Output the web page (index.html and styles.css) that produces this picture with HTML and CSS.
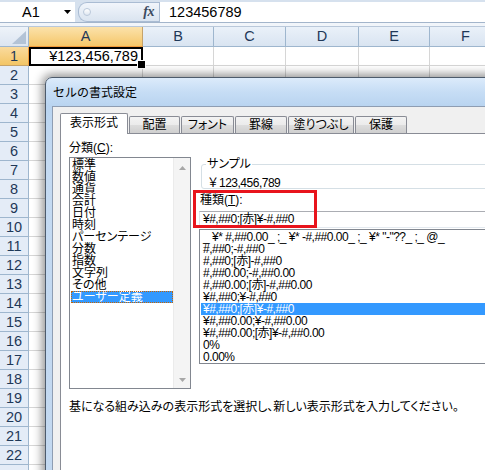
FILE: index.html
```html
<!DOCTYPE html>
<html lang="ja">
<head>
<meta charset="utf-8">
<title>セルの書式設定</title>
<link rel="stylesheet" href="styles.css">
</head>
<body>
<div class="app">
  <div class="fbar">
    <div class="namebox"><span>A1</span><svg class="dd" width="7" height="4" viewBox="0 0 7 4"><path d="M0 0H7L3.5 4Z" fill="#000"/></svg></div>
    <div class="fxzone"><span class="dot"></span><span class="fx">fx</span></div>
    <div class="finput">123456789</div>
  </div>
  <div class="fgap"></div>
  <div class="sheet">
    <div class="corner"><svg width="14" height="13" viewBox="0 0 14 13"><path d="M14 0V13H0Z" fill="#b3c3d6"/></svg></div>
    <div class="ch sel">A</div><div class="ch">B</div><div class="ch">C</div><div class="ch">D</div><div class="ch">E</div><div class="ch">F</div>
    <div class="rh sel">1</div><div class="c a1">¥123,456,789</div><div class="c"></div><div class="c"></div><div class="c"></div><div class="c"></div><div class="c"></div>
    <div class="rh">2</div><div class="c"></div><div class="c"></div><div class="c"></div><div class="c"></div><div class="c"></div><div class="c"></div>
    <div class="rh">3</div><div class="c"></div><div class="c"></div><div class="c"></div><div class="c"></div><div class="c"></div><div class="c"></div>
    <div class="rh">4</div><div class="c"></div><div class="c"></div><div class="c"></div><div class="c"></div><div class="c"></div><div class="c"></div>
    <div class="rh">5</div><div class="c"></div><div class="c"></div><div class="c"></div><div class="c"></div><div class="c"></div><div class="c"></div>
    <div class="rh">6</div><div class="c"></div><div class="c"></div><div class="c"></div><div class="c"></div><div class="c"></div><div class="c"></div>
    <div class="rh">7</div><div class="c"></div><div class="c"></div><div class="c"></div><div class="c"></div><div class="c"></div><div class="c"></div>
    <div class="rh">8</div><div class="c"></div><div class="c"></div><div class="c"></div><div class="c"></div><div class="c"></div><div class="c"></div>
    <div class="rh">9</div><div class="c"></div><div class="c"></div><div class="c"></div><div class="c"></div><div class="c"></div><div class="c"></div>
    <div class="rh">10</div><div class="c"></div><div class="c"></div><div class="c"></div><div class="c"></div><div class="c"></div><div class="c"></div>
    <div class="rh">11</div><div class="c"></div><div class="c"></div><div class="c"></div><div class="c"></div><div class="c"></div><div class="c"></div>
    <div class="rh">12</div><div class="c"></div><div class="c"></div><div class="c"></div><div class="c"></div><div class="c"></div><div class="c"></div>
    <div class="rh">13</div><div class="c"></div><div class="c"></div><div class="c"></div><div class="c"></div><div class="c"></div><div class="c"></div>
    <div class="rh">14</div><div class="c"></div><div class="c"></div><div class="c"></div><div class="c"></div><div class="c"></div><div class="c"></div>
    <div class="rh">15</div><div class="c"></div><div class="c"></div><div class="c"></div><div class="c"></div><div class="c"></div><div class="c"></div>
    <div class="rh">16</div><div class="c"></div><div class="c"></div><div class="c"></div><div class="c"></div><div class="c"></div><div class="c"></div>
    <div class="rh">17</div><div class="c"></div><div class="c"></div><div class="c"></div><div class="c"></div><div class="c"></div><div class="c"></div>
    <div class="rh">18</div><div class="c"></div><div class="c"></div><div class="c"></div><div class="c"></div><div class="c"></div><div class="c"></div>
    <div class="rh">19</div><div class="c"></div><div class="c"></div><div class="c"></div><div class="c"></div><div class="c"></div><div class="c"></div>
    <div class="rh">20</div><div class="c"></div><div class="c"></div><div class="c"></div><div class="c"></div><div class="c"></div><div class="c"></div>
    <div class="rh">21</div><div class="c"></div><div class="c"></div><div class="c"></div><div class="c"></div><div class="c"></div><div class="c"></div>
    <div class="rh">22</div><div class="c"></div><div class="c"></div><div class="c"></div><div class="c"></div><div class="c"></div><div class="c"></div>
    <div class="rh"></div><div class="c"></div><div class="c"></div><div class="c"></div><div class="c"></div><div class="c"></div><div class="c"></div>
  </div>

  <div class="dialog">
    <div class="titlebar">セルの書式設定</div>
    <div class="client">
      <div class="tabs">
        <div class="tab active">表示形式</div>
        <div class="tab w-haichi">配置</div>
        <div class="tab w-font">フォント</div>
        <div class="tab w-keisen">罫線</div>
        <div class="tab w-nuri">塗りつぶし</div>
        <div class="tab w-hogo">保護</div>
      </div>
      <div class="pane">
        <div class="left">
          <div class="lbl">分類(<u>C</u>):</div>
          <div class="listbox">
            <div class="items">
              <div class="it">標準</div>
              <div class="it">数値</div>
              <div class="it">通貨</div>
              <div class="it">会計</div>
              <div class="it">日付</div>
              <div class="it">時刻</div>
              <div class="it">パーセンテージ</div>
              <div class="it">分数</div>
              <div class="it">指数</div>
              <div class="it">文字列</div>
              <div class="it">その他</div>
              <div class="it sel">ユーザー定義</div>
            </div>
            <div class="vscroll">
              <div class="arr arr-up"><svg width="7" height="4" viewBox="0 0 7 4"><path d="M0 4H7L3.5 0Z" fill="#a7a7a7"/></svg></div>
              <div class="arr"><svg width="7" height="4" viewBox="0 0 7 4"><path d="M0 0H7L3.5 4Z" fill="#a7a7a7"/></svg></div>
            </div>
          </div>
        </div>
        <div class="right">
          <fieldset class="sample">
            <legend>サンプル</legend>
            <div class="sample-val num"><span class="yen">￥</span>123,456,789</div>
          </fieldset>
          <div class="kind">種類(<u>T</u>):</div>
          <div class="textbox num">¥#,##0;[赤]¥-#,##0</div>
          <div class="fmtlist">
            <div class="fl num">_ ¥* #,##0.00_ ;_ ¥* -#,##0.00_ ;_ ¥* "-"??_ ;_ @_</div>
            <div class="fl num">#,##0;-#,##0</div>
            <div class="fl num">#,##0;[赤]-#,##0</div>
            <div class="fl num">#,##0.00;-#,##0.00</div>
            <div class="fl num">#,##0.00;[赤]-#,##0.00</div>
            <div class="fl num">¥#,##0;¥-#,##0</div>
            <div class="fl num sel">¥#,##0;[赤]¥-#,##0</div>
            <div class="fl num">¥#,##0.00;¥-#,##0.00</div>
            <div class="fl num">¥#,##0.00;[赤]¥-#,##0.00</div>
            <div class="fl num">0%</div>
            <div class="fl num">0.00%</div>
          </div>
          <div class="redbox"></div>
        </div>
        <div class="desc">基になる組み込みの表示形式を選択し、新しい表示形式を入力してください。</div>
      </div>
    </div>
  </div>
</div>
</body>
</html>
```

FILE: styles.css
```css
* { box-sizing: border-box; margin: 0; padding: 0; }
html, body { width: 485px; height: 470px; overflow: hidden; background: #fff; }
body { font-family: "Liberation Sans", Arial, sans-serif; color: #000; }
.app { position: relative; width: 485px; height: 470px; overflow: hidden; }

/* formula bar */
.fbar { display: flex; height: 23px; padding-top: 2px; background: #d6e1ee; border-bottom: 1px solid #a3b5cb; }
.namebox { width: 75px; background: #fff; display: flex; align-items: center; justify-content: space-between; padding: 0 4px 0 22px; font-size: 14.5px; }
.dd { display: block; }
.fxzone { width: 81px; margin-left: 3px; display: flex; align-items: center; justify-content: space-between; padding: 0 5px 0 4px; border: 1px solid #aabcd3; border-right: none; border-radius: 9px 0 0 9px; background: linear-gradient(#f1f5fb, #dae4f0); }
.dot { width: 8px; height: 8px; border-radius: 50%; border: 1px solid #bac8da; background: linear-gradient(#ffffff, #dfe7f1); }
.fx { font-family: "Liberation Serif", serif; font-style: italic; font-weight: bold; font-size: 14px; color: #3b4a60; letter-spacing: -0.5px; }
.finput { flex: 1; background: #fff; border-left: 1px solid #aabcd3; padding-left: 9px; font-size: 14.5px; line-height: 20px; }
.fgap { height: 4px; background: #f1f5fa; border-bottom: 1px solid #b9c8da; }

/* sheet */
.sheet { display: grid; grid-template-columns: 29px 114px 71px 72px 73px 71px 72px; grid-template-rows: 20px repeat(23, 19px); font-size: 14.5px; }
.corner { background: linear-gradient(#eef3f9, #dce5f1); border-right: 1px solid #9eb6ce; border-bottom: 1px solid #9eb6ce; display: flex; align-items: flex-end; justify-content: flex-end; padding: 0 2px 2px 0; }
.corner svg { display: block; }
.ch { background: linear-gradient(#eaf1f9, #d9e4f1); border-right: 1px solid #9eb6ce; border-bottom: 1px solid #9eb6ce; text-align: center; line-height: 19px; color: #1f3858; }
.ch.sel { background: linear-gradient(#fbe2ab, #f5c76a); border-bottom-color: #f29b3a; border-right-color: #c6a36a; }
.rh { background: #e4ecf7; border-right: 1px solid #9eb6ce; border-bottom: 1px solid #9eb6ce; text-align: center; line-height: 18px; color: #1f3858; }
.rh.sel { background: linear-gradient(#fadb9e, #f3c565); border-right-color: #f29b3a; border-bottom-color: #c6a36a; }
.c { border-right: 1px solid #d6d6d6; border-bottom: 1px solid #d6d6d6; }
.a1 { position: relative; z-index: 2; outline: 2px solid #000; outline-offset: -2px; text-align: right; padding-right: 4px; line-height: 18px; }
.a1::after { content: ""; position: absolute; right: -4px; bottom: -4px; width: 7px; height: 7px; background: #000; border: 1px solid #fff; }

/* dialog */
.dialog { position: absolute; left: 45px; top: 77px; width: 500px; height: 420px; border: 1px solid #4d5b6c; border-radius: 7px 7px 0 0; background: linear-gradient(180deg, #dcebfb 0, #c6ddf5 14px, #b9d4f0 28px, #c4daf2 80px, #c2d8f0 100%); box-shadow: 0 0 10px 3px rgba(0,0,0,0.42); padding-left: 6px; display: flex; flex-direction: column; font-family: "Liberation Sans", "Noto Sans CJK JP", sans-serif; font-size: 12px; font-feature-settings: "palt" 1; z-index: 5; }
.titlebar { height: 28px; line-height: 28px; padding-left: 1px; font-family: "Noto Sans CJK JP", sans-serif; font-feature-settings: normal; font-size: 12px; color: #000; }
.client { flex: 1; background: #f0f0f0; border-left: 1px solid #8e9db2; border-top: 1px solid #8e9db2; padding: 6px 0 0 7px; display: flex; flex-direction: column; }
.tabs { display: flex; gap: 1px; height: 21px; margin-bottom: -1px; position: relative; z-index: 1; }
.tab { height: 17px; margin-top: 3px; border: 1px solid #898c95; border-bottom: none; border-radius: 2px 2px 0 0; background: linear-gradient(#f3f3f3, #ebebeb 50%, #dddddd 51%, #cfcfcf); text-align: center; line-height: 16px; white-space: nowrap; }
.tab.active { width: 68px; height: 21px; margin-top: 0; background: #fff; line-height: 19px; }
.w-haichi { width: 51px; }
.w-font { width: 53px; }
.w-keisen { width: 52px; }
.w-nuri { width: 66px; }
.w-hogo { width: 52px; }

.pane { flex: 1; background: #fff; border: 1px solid #898c95; display: grid; grid-template-columns: 122px 1fr; column-gap: 8px; align-content: start; padding: 8px 0 0 8px; }
.lbl { height: 12px; line-height: 12px; white-space: nowrap; }
.listbox { margin-top: 3px; height: 232px; border: 1px solid #828790; display: flex; }
.items { flex: 1; padding: 1px 0 0 1px; }
.it { height: 12px; line-height: 12px; padding-left: 1px; white-space: nowrap; }
.it.sel { background: #3399ff; color: #fff; outline: 1px dotted #c86400; outline-offset: -1px; }
.vscroll { width: 17px; background: #f4f4f4; border-left: 1px solid #ebebeb; display: flex; flex-direction: column; justify-content: space-between; }
.arr { height: 17px; display: flex; align-items: center; justify-content: center; }
.arr-up { padding-top: 3px; }
.arr svg { display: block; }

.right { margin-top: 16px; position: relative; display: flex; flex-direction: column; min-width: 0; }
.sample { margin-left: 2px; border: 1px solid #d5dfe5; border-radius: 3px; padding: 6px 4px 0 4px; }
.sample legend { line-height: 12px; padding: 0 1px; font-size: 12px; }
.sample-val { line-height: 12px; height: 12px; padding-left: 1px; white-space: nowrap; }
.yen { font-family: "Noto Sans CJK JP", sans-serif; font-feature-settings: normal; letter-spacing: 0; }
.num { letter-spacing: -0.5px; }
.kind { margin-top: 5px; height: 12px; line-height: 12px; padding-left: 1px; white-space: nowrap; }
.textbox { margin-top: 5px; height: 17px; border: 1px solid; border-color: #abadb3 #dbdfe6 #e3e9ef #e2e3ea; padding-left: 3px; line-height: 15px; white-space: nowrap; }
.fmtlist { margin-top: 1px; height: 135px; border: 1px solid #828790; padding-top: 1px; overflow: hidden; }
.fl { height: 12px; line-height: 12px; margin-left: 1px; padding-left: 2px; white-space: nowrap; }
.fl.sel { background: #3399ff; color: #fff; }
.redbox { position: absolute; left: -6px; top: 32px; width: 124px; height: 38px; border: 3px solid #e8141c; }
.desc { grid-column: 1 / -1; margin-top: 12px; line-height: 12px; white-space: nowrap; }
```
